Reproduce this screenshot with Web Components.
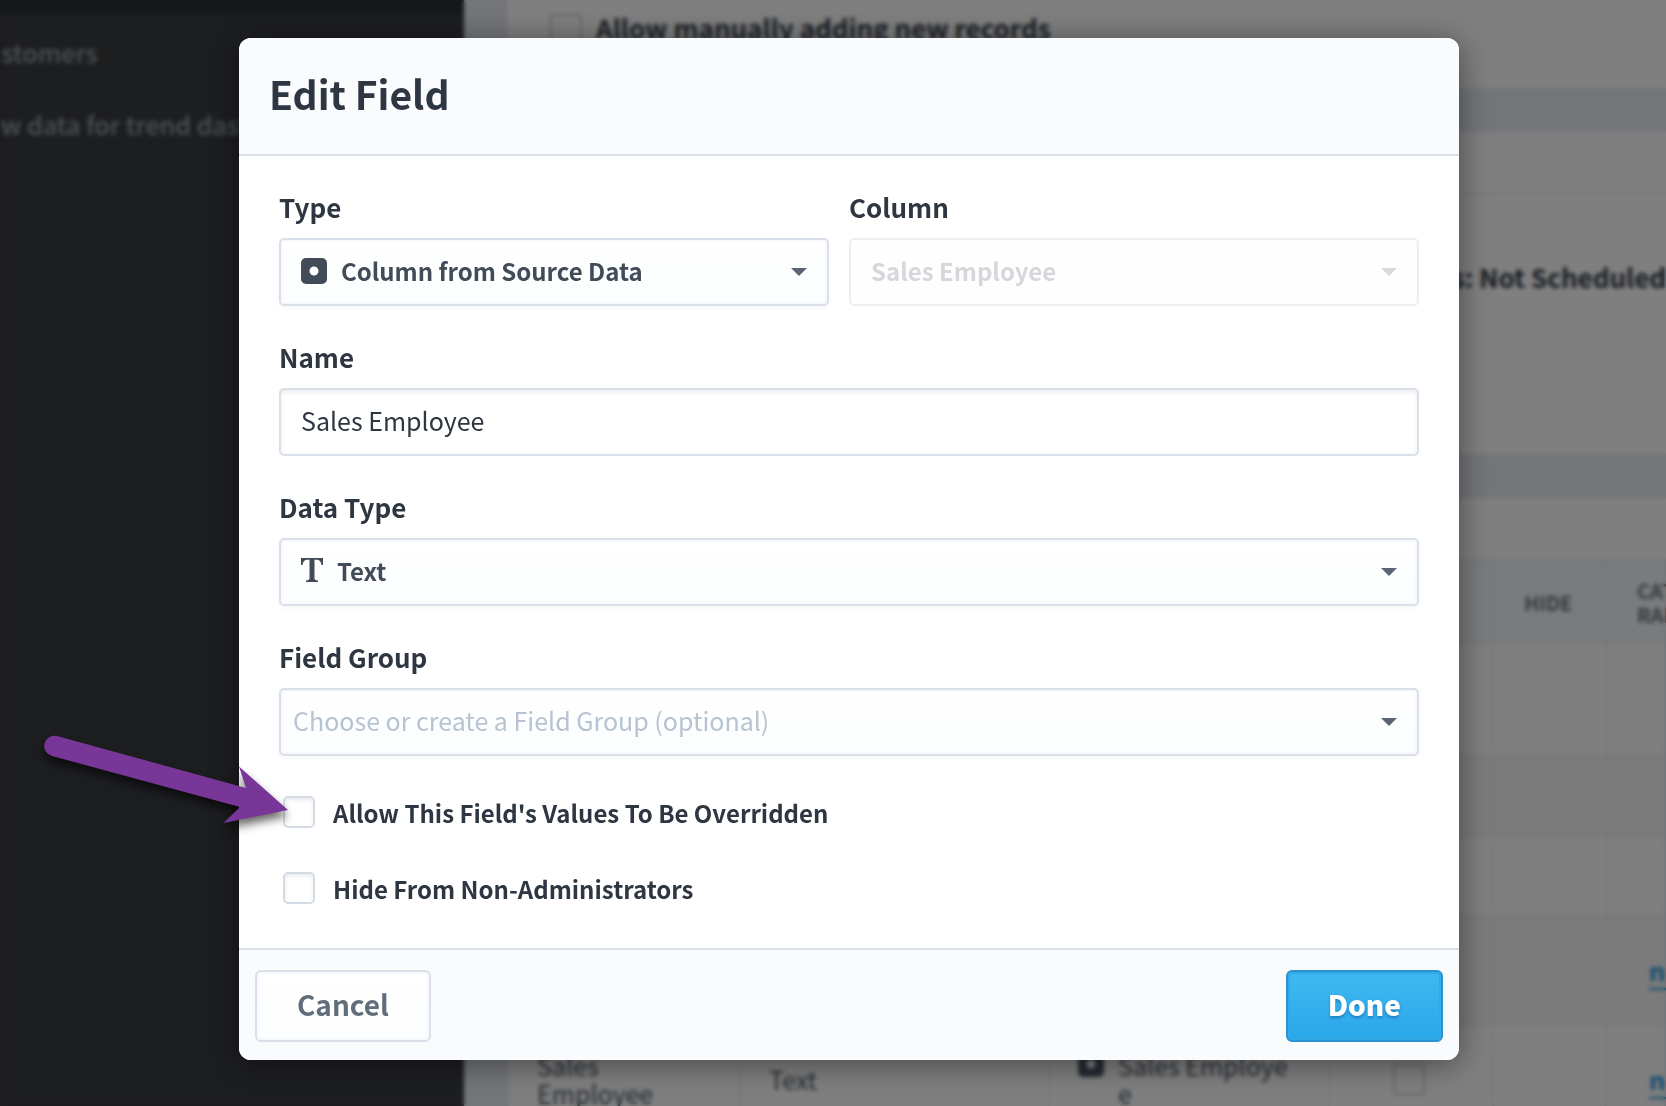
<!DOCTYPE html>
<html lang="en">
<head>
<meta charset="utf-8">
<title>Edit Field</title>
<style>
  html, body { height: 100%; }
  body {
    margin: 0;
    overflow: hidden;
    background: #fff;
    color: #2e3642;
    font-family: "Noto Sans CJK SC", "Noto Sans", sans-serif;
    font-size: 25px;
    line-height: 36px;
  }
</style>
</head>
<body>
<app-page>
  <app-sidebar slot="side">
    <side-item>Customers</side-item>
    <side-item>Raw data for trend dashboards</side-item>
  </app-sidebar>
  <settings-card style="--card-height: 88px"><manual-records></manual-records></settings-card>
  <settings-card style="--card-height: 322px"><card-heading></card-heading><schedule-status>s: Not Scheduled</schedule-status></settings-card>
  <settings-card style="--card-height: 700px"><card-heading></card-heading><fields-table></fields-table></settings-card>
</app-page>
<modal-dialog>
  <span slot="title">Edit Field</span>
  <field-row>
    <select-field label="Type" value="Column from Source Data" icon="column" style="flex: 550"></select-field>
    <select-field label="Column" value="Sales Employee" disabled style="flex: 570"></select-field>
  </field-row>
  <text-field label="Name" value="Sales Employee"></text-field>
  <select-field label="Data Type" value="Text" icon="text"></select-field>
  <select-field label="Field Group" value="Choose or create a Field Group (optional)" placeholder></select-field>
  <check-field label="Allow This Field's Values To Be Overridden"></check-field>
  <check-field label="Hide From Non-Administrators"></check-field>
  <ui-button slot="actions">Cancel</ui-button>
  <ui-button slot="actions" primary>Done</ui-button>
</modal-dialog>
<pointer-arrow></pointer-arrow>

<script>
const define = (name, render) => customElements.define(name, class extends HTMLElement {
  constructor() { super(); this.attachShadow({ mode: "open" }); }
  connectedCallback() {
    const t = document.createElement("template");
    t.innerHTML = "<style>*{box-sizing:border-box}:host{box-sizing:border-box}</style>" + render(this);
    this.shadowRoot.replaceChildren(t.content.cloneNode(true));
  }
});

const columnIcon = `<svg viewBox="0 0 26 26" width="26" height="26" aria-hidden="true"><path fill="currentColor" fill-rule="evenodd" d="M5 0h16a5 5 0 0 1 5 5v16a5 5 0 0 1-5 5H5a5 5 0 0 1-5-5V5a5 5 0 0 1 5-5zm8 8.500a4.500 4.500 0 1 0 0 9a4.500 4.500 0 0 0 0-9z"/></svg>`;
const serifIcon = `<svg viewBox="0 0 22 26" width="22" height="26" aria-hidden="true"><path fill="currentColor" d="M0 0h22v7h-1.500C20 3.500 18.500 1.800 15.500 1.800H13.500V20.500c0 1.300.8 1.600 3.500 1.900V24H5v-1.600c2.700-.3 3.500-.6 3.500-1.900V1.800H6.500C3.500 1.800 2 3.500 1.500 7H0z"/></svg>`;
const caret = `<svg class="caret" viewBox="0 0 16 8" width="16" height="8" aria-hidden="true"><path fill="currentColor" d="M0 0h16L8 8z"/></svg>`;

define("app-page", () => `
  <style>
    :host { display: flex; height: 100vh; overflow: hidden; background: #e7ebf3; }
    main { flex: 1; min-width: 0; display: flex; flex-direction: column; gap: 44px; padding-left: 43px; }
  </style>
  <slot name="side"></slot><main><slot></slot></main>`);

define("app-sidebar", () => `
  <style>
    :host { display: block; flex: none; width: 464px; height: 100%; overflow: hidden; background: #3a3c40; color: #9aa2a6; font-weight: 500; }
    .bar { height: 14px; background: #2b2e36; }
    nav { display: flex; flex-direction: column; gap: 36px; margin: 20px 0 0 -30px; white-space: nowrap; }
  </style>
  <div class="bar"></div><nav><slot></slot></nav>`);
define("side-item", () => `<style>:host{display:block}</style><slot></slot>`);

define("settings-card", () => `
  <style>:host { display: block; flex: none; height: var(--card-height); background: #fff; overflow: hidden; }</style><slot></slot>`);
define("card-heading", () => `<style>:host { display: block; height: 63px; border-bottom: 2px solid #edf1f6; }</style>`);
define("manual-records", () => `
  <style>
    label { display: flex; align-items: center; gap: 14px; padding: 10px 0 0 43px; font-size: 26px; font-weight: 700; }
    input { appearance: none; margin: 4px 0 0; width: 32px; height: 32px; border: 2px solid #c8d1db; border-radius: 4px; background: #fff; }
  </style>
  <label><input type="checkbox">Allow manually adding new records</label>`);
define("schedule-status", () => `
  <style>:host { display: block; padding: 64px 0 0 0; text-align: right; font-size: 26px; font-weight: 700; }</style><slot></slot>`);

define("fields-table", () => `
  <style>
    table { width: 100%; table-layout: fixed; border-collapse: collapse; color: #4a5563; }
    th { height: 81px; padding: 0 0 0 28px; background: #f5f7fa; font-size: 20px; line-height: 24px; text-align: left; font-weight: 700; color: #69737f; border: 2px solid #e9eef4; }
    td { padding: 0 0 0 28px; border: 2px solid #e9eef4; line-height: 28px; font-size: 25px; }
    tr.alt td { background: #f7f7f8; }
    .source { display: flex; gap: 14px; align-items: flex-start; }
    a { color: #1c96dd; font-weight: 700; text-decoration: none; border-bottom: 2px solid currentColor; }
    input { appearance: none; display: block; margin: 0 auto; width: 32px; height: 32px; border: 2px solid #c8d1db; border-radius: 4px; }
    td.check { padding: 0 4px 0 0; }
    th:nth-child(5), th:nth-child(6) { padding-left: 30px; }
    td:last-child { padding-left: 42px; }
  </style>
  <table>
    <colgroup><col style="width:232px"><col style="width:309px"><col style="width:280px"><col style="width:164px"><col style="width:113px"><col></colgroup>
    <thead><tr><th></th><th></th><th></th><th></th><th>HIDE</th><th>CAT<br>RAN</th></tr></thead>
    <tbody>
      <tr style="height:113px"><td></td><td></td><td></td><td></td><td></td><td></td></tr>
      <tr style="height:80px" class="alt"><td></td><td></td><td></td><td></td><td></td><td></td></tr>
      <tr style="height:80px"><td></td><td></td><td></td><td></td><td></td><td></td></tr>
      <tr style="height:108px" class="alt"><td></td><td></td><td></td><td></td><td></td><td><a href="#">ne</a></td></tr>
      <tr style="height:110px"><td>Sales<br>Employee</td><td>Text</td><td><div class="source">${columnIcon}<span>Sales Employe<br>e</span></div></td><td class="check"><input type="checkbox" aria-label="Hide"></td><td></td><td><a href="#">ne</a></td></tr>
    </tbody>
  </table>`);

define("modal-dialog", () => `
  <style>
    :host { position: fixed; inset: 0; display: flex; justify-content: center; align-items: flex-start; padding: 38px 0 0 32px; background: rgba(0,0,0,.5); backdrop-filter: blur(2px); }
    section { width: 74%; min-width: 1220px; border-radius: 12px; overflow: hidden; background: #fff; box-shadow: 0 4px 32px rgba(0,0,0,.45); }
    header { height: 118px; padding: 25px 30px; background: #fafbfd; border-bottom: 2px solid #d9e0e9; }
    h1 { margin: 0; font-size: 39px; line-height: 60px; font-weight: 700; }
    form { display: flex; flex-direction: column; padding: 31px 40px 9px; }
    footer { display: flex; justify-content: space-between; padding: 20px 16px 18px; background: #fafbfd; border-top: 2px solid #d9e0e9; }
  </style>
  <section role="dialog" aria-label="Edit Field">
    <header><h1><slot name="title"></slot></h1></header>
    <form><slot></slot></form>
    <footer><slot name="actions"></slot></footer>
  </section>`);

define("field-row", () => `<style>:host { display: flex; gap: 20px; }</style><slot></slot>`);

const fieldCss = `
  :host { display: flex; flex-direction: column; gap: 11px; min-width: 0; padding-bottom: 31px; }
  label { font-size: 26px; line-height: 40px; font-weight: 700; }
  input, select { appearance: none; width: 100%; height: 68px; margin: 0; border: 2px solid #d9e0e9; border-radius: 5px; font: inherit; line-height: 36px; color: inherit; outline: none; }`;

define("text-field", el => `
  <style>${fieldCss}
    input { padding: 0 20px 4px; background: #fff; box-shadow: inset 0 2px 4px rgba(40,60,90,.10); }
  </style>
  <label for="box">${el.getAttribute("label")}</label>
  <input id="box" type="text" value="${el.getAttribute("value")}">`);

define("select-field", el => `
  <style>${fieldCss}
    .box { display: grid; grid-template-columns: auto 1fr auto; align-items: center; color: #424c58; }
    select { grid-area: 1 / 1 / 2 / 4; padding: 0 20px 2px; font-size: 24px; font-weight: 700; background: linear-gradient(#fff, #fbfdfe); box-shadow: 0 2px 4px rgba(40,60,90,.04), inset 0 0 0 2px #f7f9fc; }
    .icon { grid-area: 1 / 1; z-index: 1; display: flex; margin-left: 22px; padding-bottom: 2px; pointer-events: none; }
    .caret { grid-area: 1 / 3; z-index: 1; margin-right: 22px; color: #5b6474; pointer-events: none; }
    :host([icon="column"]) select { padding-left: 60px; }
    :host([icon="text"]) select { padding-left: 56px; }
    :host([placeholder]) select { padding: 0 12px 4px; font-size: 25px; font-weight: 400; color: #b8c3d1; }
    :host([disabled]) select { color: #d5d7da; opacity: 1; border-color: #ebeff4; box-shadow: none; background: #fefefe; }
    :host([disabled]) .caret { color: #d8dadd; }
  </style>
  <label for="box">${el.getAttribute("label")}</label>
  <div class="box">
    <select id="box" ${el.hasAttribute("disabled") ? "disabled" : ""}><option>${el.getAttribute("value")}</option></select>
    ${el.hasAttribute("icon") ? `<span class="icon">${el.getAttribute("icon") === "text" ? serifIcon : columnIcon}</span>` : ""}
    ${caret}
  </div>`);

define("check-field", el => `
  <style>
    :host { display: flex; height: 76px; padding: 7px 4px 0; }
    label { display: flex; align-items: flex-start; gap: 18px; font-size: 24px; font-weight: 700; line-height: 38px; }
    input { appearance: none; flex: none; margin: 2px 0 0; width: 32px; height: 32px; border: 2px solid #d5dbe4; border-radius: 5px; background: #fff; box-shadow: inset 0 2px 4px rgba(40,60,90,.10); }
  </style>
  <label><input type="checkbox">${el.getAttribute("label")}</label>`);

define("ui-button", () => `
  <style>
    :host { display: block; }
    button { height: 72px; padding: 0 40px 4px; border: 2px solid #d9e0e9; border-radius: 6px; background: linear-gradient(#fff, #fcfdfe); color: #626d7b; font: inherit; font-size: 28px; line-height: 40px; font-weight: 700; box-shadow: inset 0 0 0 2px #f7f9fc; }
    :host([primary]) button { border-color: #2a94d2; background: linear-gradient(#40b9f0, #2aa7ea); color: #fff; font-weight: 900; box-shadow: inset 0 0 0 2px #33a9e6; text-shadow: 0 2px 3px rgba(0,60,120,.4); }
  </style>
  <button type="button"><slot></slot></button>`);

define("pointer-arrow", () => `
  <style>
    :host { position: absolute; left: 34px; top: 726px; pointer-events: none; }
    svg { display: block; overflow: visible; filter: drop-shadow(0 6px 5px rgba(0,0,0,.6)); }
  </style>
  <svg width="260" height="110" viewBox="34 726 260 110" aria-hidden="true"><path fill="#793699" d="M57 736L246 788L239 766.500L288 810L223.500 823L240 807L52 756A10.300 10.300 0 0 1 57 736z"/></svg>`);
</script>
</body>
</html>
